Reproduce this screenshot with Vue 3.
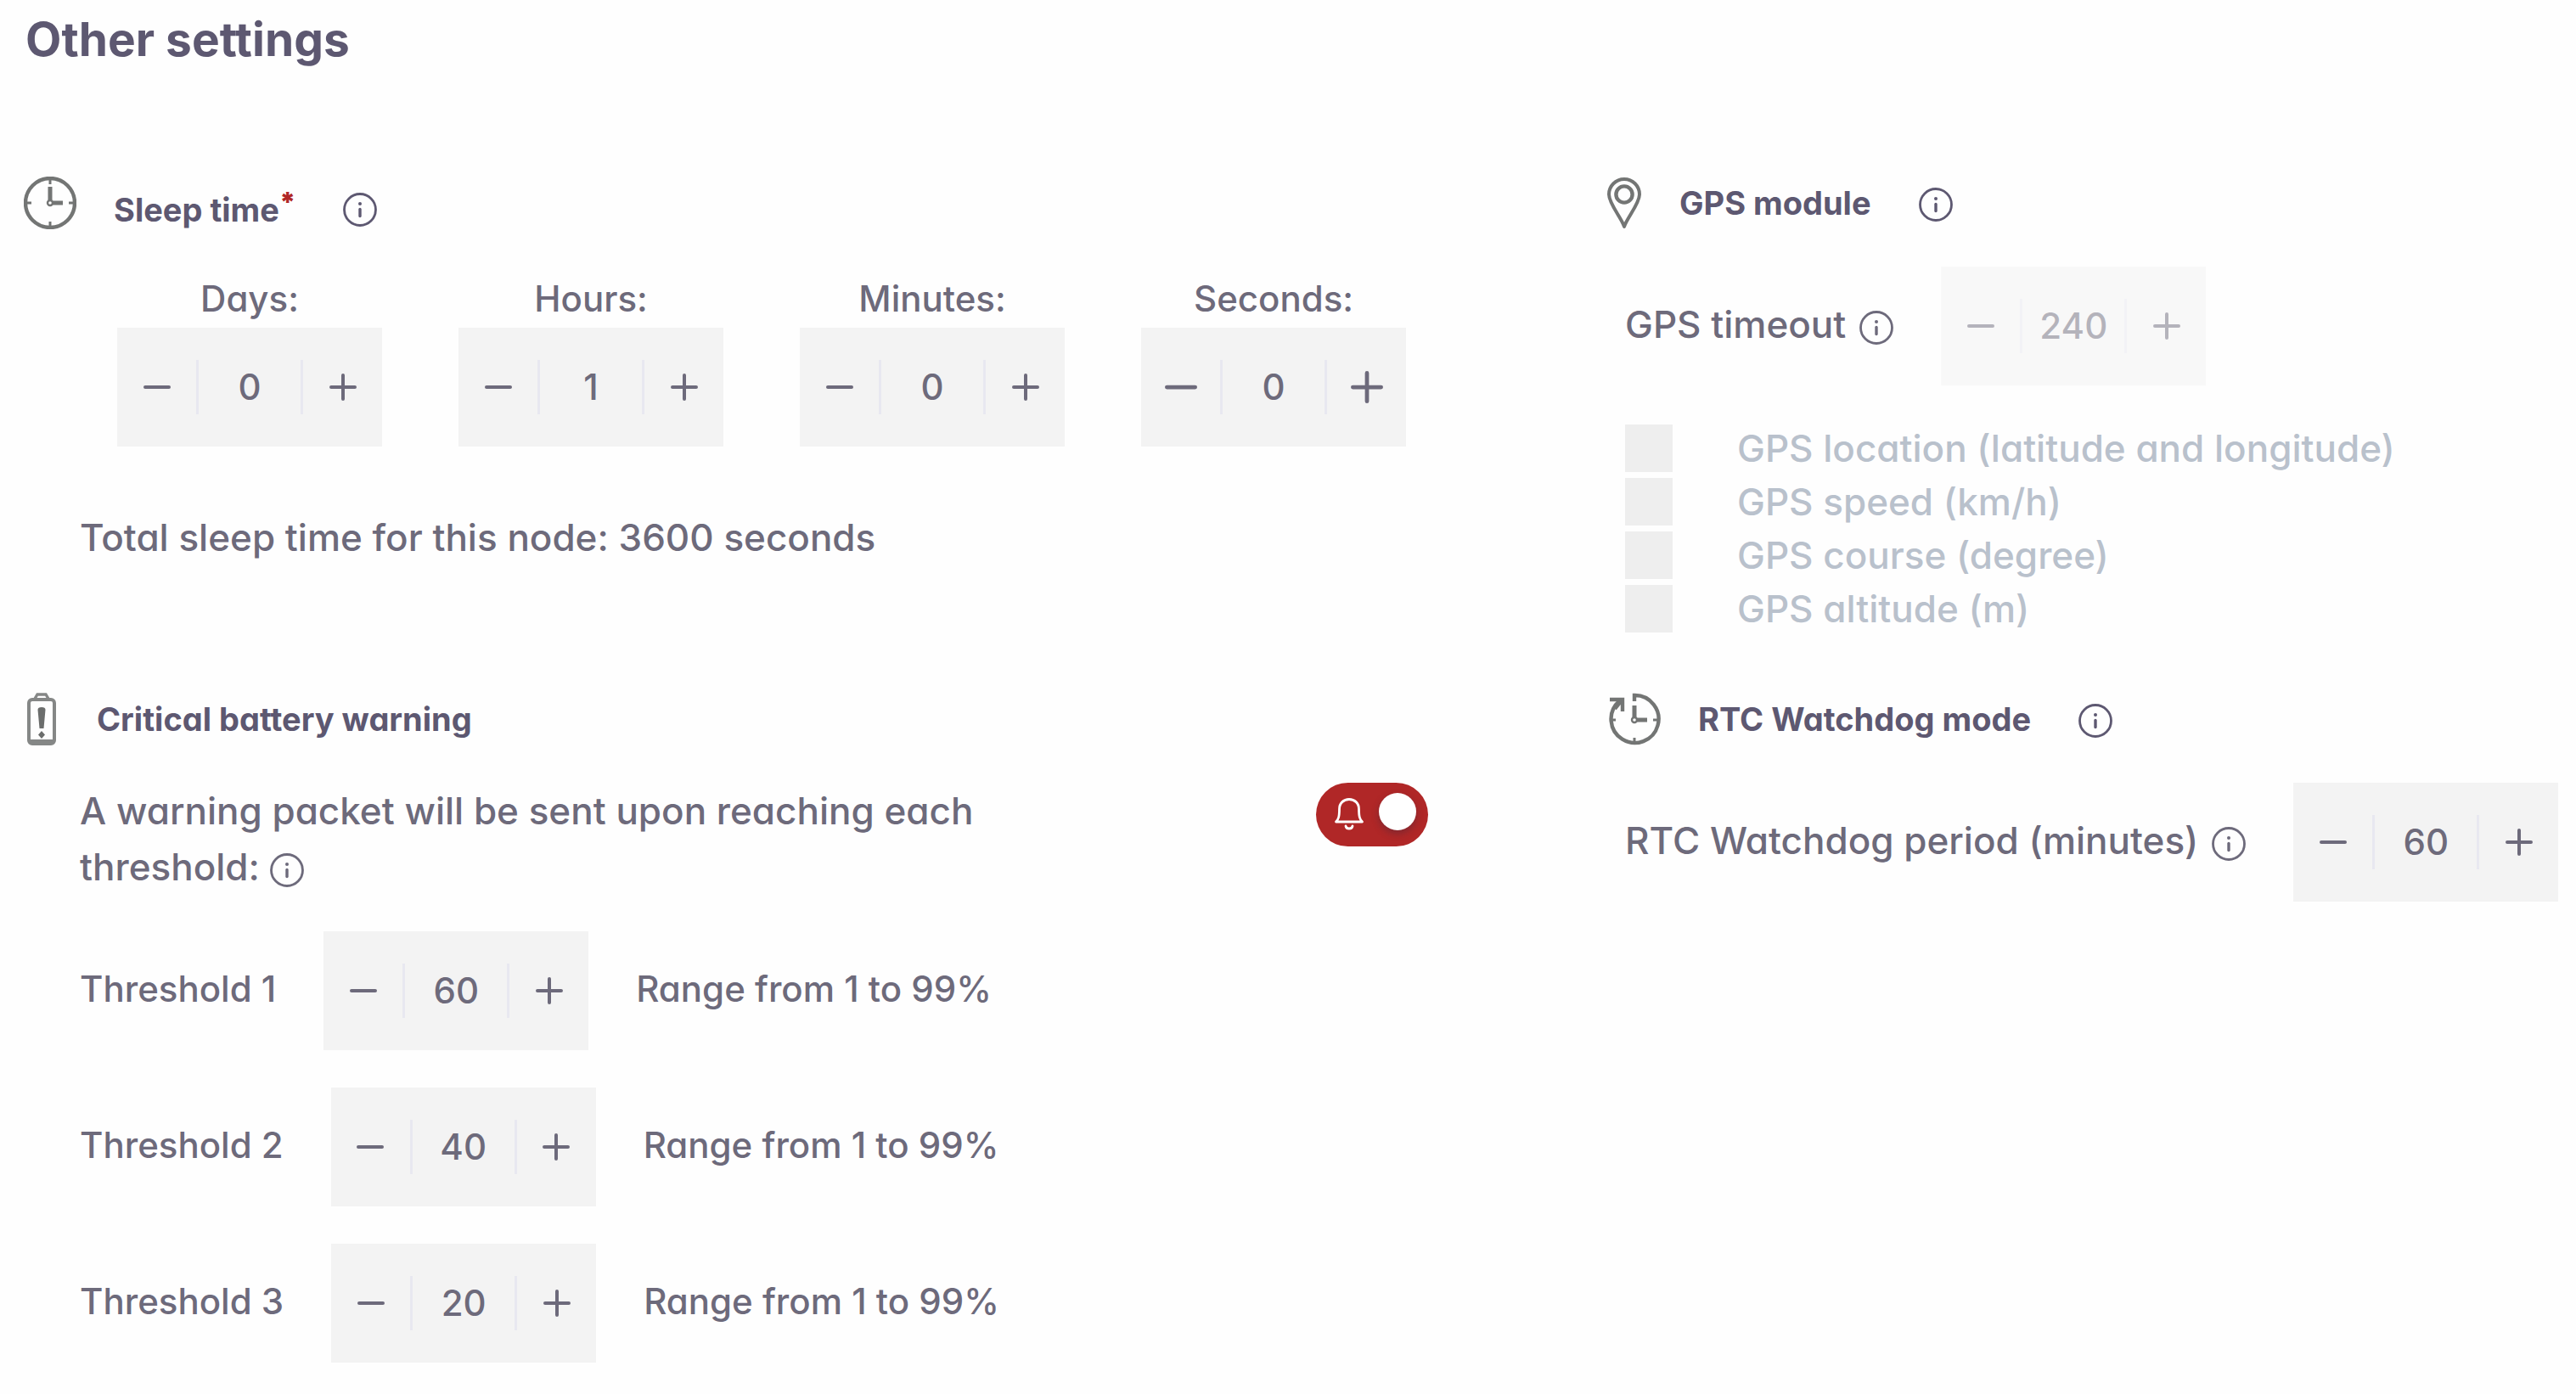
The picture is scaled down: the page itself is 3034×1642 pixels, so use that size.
<template>
    <main class="settings">
        <svg class="sprite" aria-hidden="true">
            <symbol id="info" viewBox="0 0 40 40">
                <circle cx="20" cy="20" r="18.5" fill="none" stroke="currentColor" stroke-width="2.8" />
                <circle cx="20" cy="13" r="2" fill="currentColor" />
                <path d="M20 19.5v8" stroke="currentColor" stroke-width="3.4" stroke-linecap="round" />
            </symbol>
            <symbol id="minus" viewBox="0 0 32 32">
                <path d="M2 16h28" stroke="currentColor" stroke-width="4" stroke-linecap="round" />
            </symbol>
            <symbol id="plus" viewBox="0 0 32 32">
                <path d="M2 16h28M16 2v28" stroke="currentColor" stroke-width="4" stroke-linecap="round" />
            </symbol>
        </svg>

        <h1>Other settings</h1>

        <div class="columns">
            <section>
                <header class="head required">
                    <svg class="icon" viewBox="0 0 62 62" fill="none" stroke="#737574">
                        <circle cx="31" cy="31" r="29" stroke-width="4.4" />
                        <path d="M31 4v5M31 53v5M4 31h5M53 31h5" stroke-width="3" />
                        <path d="M31 12v16M34 31h12" stroke-width="5" />
                        <circle cx="31" cy="31" r="3" stroke-width="2.4" />
                    </svg>
                    <h2>Sleep time<sup>*</sup></h2>
                    <button class="info" aria-label="About sleep time"><svg><use href="#info" /></svg></button>
                </header>
                <div class="times">
                    <div v-for="t in times" :key="t.id" class="time">
                        <label :for="t.id">{{ t.label }}</label>
                        <div class="stepper" :class="{ active: t.active }">
                            <button :aria-label="'Decrease ' + t.id" @click="step(t, -1)"><svg><use href="#minus" /></svg></button>
                            <input :id="t.id" type="number" v-model.number="t.value">
                            <button :aria-label="'Increase ' + t.id" @click="step(t, 1)"><svg><use href="#plus" /></svg></button>
                        </div>
                    </div>
                </div>
                <p class="total">Total sleep time for this node: {{ total }} seconds</p>
            </section>

            <section>
                <header class="head">
                    <svg class="icon pin" viewBox="0 0 42 62" fill="none" stroke="#737574">
                        <path d="M21 59C18 49 3 32 3 21a18 18 0 0 1 36 0c0 11-15 28-18 38z" stroke-width="4" stroke-linejoin="round" />
                        <circle cx="21" cy="21" r="9.6" stroke-width="4.4" />
                    </svg>
                    <h2>GPS module</h2>
                    <button class="info" aria-label="About the GPS module"><svg><use href="#info" /></svg></button>
                </header>
                <div class="field">
                    <label for="timeout">GPS timeout</label>
                    <button class="info" aria-label="About GPS timeout"><svg><use href="#info" /></svg></button>
                    <div class="stepper disabled">
                        <button aria-label="Decrease timeout" disabled><svg><use href="#minus" /></svg></button>
                        <input id="timeout" type="number" v-model.number="timeout.value" disabled>
                        <button aria-label="Increase timeout" disabled><svg><use href="#plus" /></svg></button>
                    </div>
                </div>
                <ul class="checks">
                    <li v-for="(c, i) in gpsOptions" :key="c">
                        <input :id="'gps' + i" type="checkbox" disabled>
                        <label :for="'gps' + i">{{ c }}</label>
                    </li>
                </ul>
            </section>

            <section>
                <header class="head battery">
                    <svg class="icon" viewBox="0 0 34 62" fill="none" stroke="#858786">
                        <path d="M9 7l3-5h10l3 5" stroke-width="3.4" />
                        <rect x="2" y="8" width="30" height="52" rx="4" stroke-width="4" />
                        <path d="M4 57h26" stroke-width="4" />
                        <path d="M12.500 20q0-3 4.500-3t4.500 3l-2 22h-5zM17 45l4 4.500-4 4.500-4-4.500z" fill="#6b6d6c" stroke="none" />
                    </svg>
                    <h2>Critical battery warning</h2>
                </header>
                <div class="warning">
                    <p>A warning packet will be sent upon reaching each threshold:
                        <button class="info" aria-label="About thresholds"><svg><use href="#info" /></svg></button>
                    </p>
                    <label class="toggle">
                        <input type="checkbox" v-model="warningOn" aria-label="Critical battery warning">
                        <svg viewBox="0 0 36 40" fill="none" stroke="#fff" stroke-width="2.800" stroke-linejoin="round">
                            <path d="M2.500 29c3-3 4-6 4-15 0-7 5-11.500 11.500-11.500S29.500 7 29.500 14c0 9 1 12 4 15z" />
                            <path d="M14 34c.5 4 7.500 4 8 0" stroke-linecap="round" />
                        </svg>
                    </label>
                </div>
                <div class="thresholds">
                    <div v-for="t in thresholds" :key="t.id" class="threshold">
                        <label :for="t.id">{{ t.label }}</label>
                        <div class="stepper">
                            <button :aria-label="'Decrease ' + t.label" @click="step(t, -1)"><svg><use href="#minus" /></svg></button>
                            <input :id="t.id" type="number" min="1" max="99" v-model.number="t.value">
                            <button :aria-label="'Increase ' + t.label" @click="step(t, 1)"><svg><use href="#plus" /></svg></button>
                        </div>
                        <span>Range from 1 to 99%</span>
                    </div>
                </div>
            </section>

            <section>
                <header class="head rtc">
                    <svg class="icon" viewBox="0 0 62 62" fill="none" stroke="#737574">
                        <path d="M31 10V3a28 28 0 1 1-18 7" stroke-width="4.400" />
                        <path d="M2 8h15v14M16 9L8 19" stroke-width="4.400" />
                        <path d="M31 53v5M4 32h5M53 32h5" stroke-width="3" />
                        <path d="M31 15v14M34 32h12" stroke-width="5" />
                        <circle cx="31" cy="32" r="3" stroke-width="2.400" />
                    </svg>
                    <h2>RTC Watchdog mode</h2>
                    <button class="info" aria-label="About RTC Watchdog mode"><svg><use href="#info" /></svg></button>
                </header>
                <div class="field">
                    <label for="watchdog">RTC Watchdog period (minutes)</label>
                    <button class="info" aria-label="About the watchdog period"><svg><use href="#info" /></svg></button>
                    <div class="stepper">
                        <button aria-label="Decrease period" @click="step(watchdog, -1)"><svg><use href="#minus" /></svg></button>
                        <input id="watchdog" type="number" v-model.number="watchdog.value">
                        <button aria-label="Increase period" @click="step(watchdog, 1)"><svg><use href="#plus" /></svg></button>
                    </div>
                </div>
            </section>
        </div>
    </main>
</template>

<script setup>
import { computed, reactive, ref } from 'vue';

const times = reactive([
    { id: "days", label: "Days:", value: 0, seconds: 86400 },
    { id: "hours", label: "Hours:", value: 1, seconds: 3600 },
    { id: "minutes", label: "Minutes:", value: 0, seconds: 60 },
    { id: "seconds", label: "Seconds:", value: 0, seconds: 1, active: true },
])
const thresholds = reactive([
    { id: "threshold1", label: "Threshold 1", value: 60 },
    { id: "threshold2", label: "Threshold 2", value: 40 },
    { id: "threshold3", label: "Threshold 3", value: 20 },
])
const gpsOptions = [
    "GPS location (latitude and longitude)",
    "GPS speed (km/h)",
    "GPS course (degree)",
    "GPS altitude (m)",
]
const timeout = reactive({ value: 240 })
const watchdog = reactive({ value: 60 })
const warningOn = ref(true)

const total = computed(() => times.reduce((sum, t) => sum + t.value * t.seconds, 0))
const step = (item, by) => {
    item.value = Math.max(0, item.value + by)
}
</script>

<style>
body {
    background: #fefefe;
}
</style>

<style scoped>
.settings {
    padding: 10px 16px 36px 28px;
    font-family: Inter, Lato, sans-serif;
    font-size: 44px;
    font-weight: 500;
    line-height: 66px;
    color: #6d6a7b;
    /* single-storey a */
    font-feature-settings: "cv11";
}

.sprite {
    position: absolute;
    width: 0;
    height: 0;
}

h1,
h2,
p,
ul {
    margin: 0;
    padding: 0;
}

h1 {
    padding-left: 2px;
    font-size: 55px;
    line-height: 72px;
    color: #5d5871;
}

h2 {
    font-size: 38px;
    line-height: 60px;
    color: #5d5871;
}

button {
    padding: 0;
    border: 0;
    background: none;
    color: inherit;
    font: inherit;
}

.columns {
    display: grid;
    grid-template-columns: 1fr 1126px;
    row-gap: 68px;
    margin-top: 126px;
}

.head {
    display: flex;
    align-items: center;
    height: 62px;
    margin-bottom: 44px;
    color: #5d5871;
}

.head .icon {
    width: 62px;
    height: 62px;
    margin-right: 44px;
}

.head .pin {
    width: 42px;
}

.head.battery {
    padding-left: 4px;
}

.head.battery .icon {
    width: 34px;
    margin-right: 48px;
}

.head.rtc {
    padding-left: 2px;
}

.head .info {
    margin-left: 56px;
}

.required h2,
.required .info {
    padding-top: 16px;
}

sup {
    font-size: 32px;
    font-weight: 900;
    line-height: 0;
    vertical-align: 12px;
    color: #b02727;
}

.info {
    padding-top: 4px;
    line-height: 0;
}

.info svg {
    width: 40px;
    height: 40px;
}

.stepper {
    display: flex;
    align-items: center;
    width: 312px;
    height: 140px;
    font-size: 42px;
    background: #f3f3f3;
}

.stepper button {
    flex: 1;
    line-height: 0;
}

.stepper svg {
    width: 32px;
    height: 32px;
}

.stepper.active svg {
    width: 38px;
    height: 38px;
}

.stepper input {
    box-sizing: border-box;
    width: 126px;
    height: 64px;
    padding: 0;
    border: solid #e8e8f0;
    border-width: 0 3px;
    border-radius: 0;
    background: none;
    color: inherit;
    font: inherit;
    text-align: center;
    appearance: textfield;
}

.stepper input::-webkit-inner-spin-button {
    appearance: none;
    margin: 0;
}

.stepper.disabled {
    opacity: 0.5;
}

.times {
    display: flex;
    gap: 90px;
    padding-left: 110px;
    font-size: 42px;
}

.time {
    text-align: center;
}

.time label {
    display: block;
    padding-top: 4px;
    line-height: 68px;
}

.total {
    margin-top: 74px;
    padding-left: 66px;
}

.field {
    display: flex;
    align-items: center;
    padding-left: 22px;
}

.field label,
.threshold label,
.threshold span {
    padding-bottom: 4px;
}

.field .info {
    margin-left: 16px;
}

.field .stepper {
    margin-left: 56px;
}

.checks {
    margin-top: 42px;
    padding-left: 22px;
    list-style: none;
    color: #b9c1cc;
}

.checks li {
    display: flex;
    align-items: center;
    height: 63px;
}

.checks input {
    appearance: none;
    width: 56px;
    height: 56px;
    margin: 0 76px 0 0;
    background: #eee;
}

.warning {
    display: flex;
    justify-content: space-between;
    align-items: flex-start;
    width: 1588px;
    padding-left: 66px;
}

.warning p {
    max-width: 1120px;
}

.warning .info {
    padding: 0;
    vertical-align: -8px;
}

.toggle {
    position: relative;
    line-height: 0;
}

.toggle input {
    appearance: none;
    width: 132px;
    height: 75px;
    margin: 0;
    border-radius: 38px;
    background: #b02727;
}

.toggle input::before {
    content: "";
    position: absolute;
    top: 12px;
    right: 14px;
    width: 44px;
    height: 44px;
    border-radius: 50%;
    background: #fff;
    box-shadow: 0 4px 8px rgba(60, 40, 60, 0.4);
}

.toggle svg {
    position: absolute;
    top: 17px;
    left: 21px;
    width: 36px;
    height: 40px;
}

.thresholds {
    display: grid;
    gap: 44px;
    margin-top: 43px;
    padding-left: 66px;
    font-size: 42px;
}

.threshold {
    display: flex;
    align-items: center;
    gap: 56px;
}
</style>
